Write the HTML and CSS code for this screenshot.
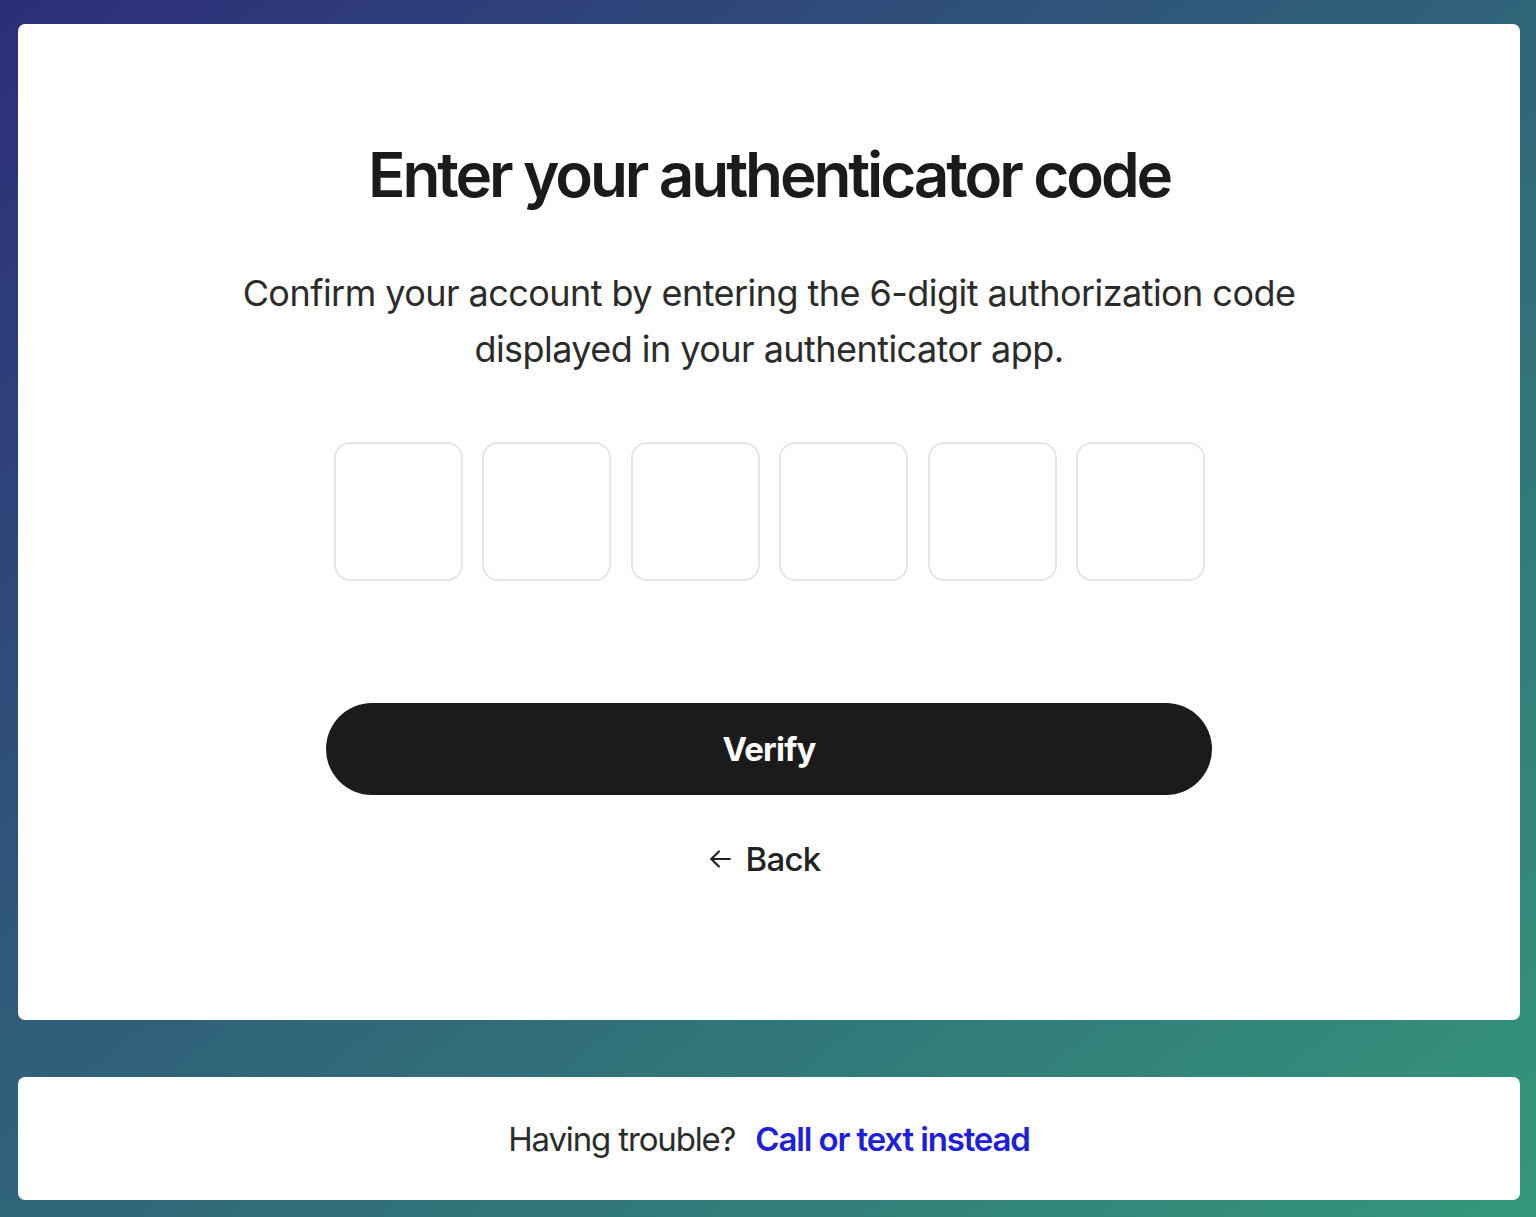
FILE: index.html
```html
<!DOCTYPE html>
<html lang="en">
<head>
<meta charset="utf-8">
<title>Enter your authenticator code</title>
<link rel="stylesheet" href="styles.css">
</head>
<body>
<div class="page">
  <main class="card main-card">
    <h1 class="title">Enter your authenticator code</h1>
    <p class="subtitle">Confirm your account by entering the 6-digit authorization code<br>displayed in your authenticator app.</p>
    <div class="code-row">
      <input class="code-box" type="text" maxlength="1" aria-label="Digit 1">
      <input class="code-box" type="text" maxlength="1" aria-label="Digit 2">
      <input class="code-box" type="text" maxlength="1" aria-label="Digit 3">
      <input class="code-box" type="text" maxlength="1" aria-label="Digit 4">
      <input class="code-box" type="text" maxlength="1" aria-label="Digit 5">
      <input class="code-box" type="text" maxlength="1" aria-label="Digit 6">
    </div>
    <button class="verify-btn" type="button">Verify</button>
    <a class="back-link" href="#">
      <svg class="back-icon" width="26" height="26" viewBox="0 0 24 24" fill="none" stroke="currentColor" stroke-width="2" stroke-linecap="round" stroke-linejoin="round"><path d="M21 12H4"/><path d="M11 5l-7 7 7 7"/></svg>
      <span>Back</span>
    </a>
  </main>
  <footer class="card help-card">
    <span class="help-text">Having trouble?</span>
    <a class="help-link" href="#">Call or text instead</a>
  </footer>
</div>
</body>
</html>
```

FILE: styles.css
```css
html, body {
  margin: 0;
  padding: 0;
}
body {
  width: 1536px;
  height: 1217px;
  overflow: hidden;
  background: linear-gradient(to bottom right, #2d2d7a 0%, #306479 50%, #34977a 100%);
  font-family: Inter, "Noto Sans", sans-serif;
  color: #1b1b1b;
}
.page {
  display: flex;
  flex-direction: column;
  padding: 24px 16px 0 18px;
}
.card {
  background: #fff;
  border-radius: 7px;
  box-sizing: border-box;
  width: 1502px;
}
.main-card {
  height: 996px;
  display: flex;
  flex-direction: column;
  align-items: center;
  padding-top: 118px;
}
.title {
  margin: 0;
  font-size: 62px;
  font-weight: 600;
  letter-spacing: -3.1px;
  line-height: 66px;
  color: #1b1b1b;
}
.subtitle {
  margin: 57px 0 0;
  text-align: center;
  font-size: 36px;
  line-height: 56px;
  font-weight: 400;
  letter-spacing: -0.55px;
  color: #2b2b2b;
}
.code-row {
  display: flex;
  gap: 19.5px;
  margin-top: 65px;
  margin-left: 1px;
}
.code-box {
  width: 129px;
  height: 139px;
  box-sizing: border-box;
  border: 2px solid #e6e6e6;
  border-radius: 16px;
  background: #fff;
  padding: 0;
  outline: none;
  font: inherit;
}
.verify-btn {
  margin-top: 122px;
  width: 886px;
  height: 92px;
  border: none;
  border-radius: 46px;
  background: #1b1b1b;
  color: #fff;
  font-family: inherit;
  font-size: 33px;
  font-weight: 700;
  letter-spacing: -0.8px;
  cursor: pointer;
}
.back-link {
  margin-top: 44px;
  display: flex;
  align-items: center;
  gap: 12px;
  color: #222;
  text-decoration: none;
  font-size: 33px;
  font-weight: 500;
  letter-spacing: -0.7px;
  margin-right: 10px;
}
.back-icon {
  display: block;
}
.help-card {
  margin-top: 57px;
  height: 123px;
  display: flex;
  align-items: center;
  justify-content: center;
  gap: 20px;
  font-size: 33px;
  letter-spacing: -1.15px;
}
.help-text {
  color: #2b2b2b;
}
.help-link {
  color: #1f1fd6;
  font-weight: 600;
  text-decoration: none;
}
```
